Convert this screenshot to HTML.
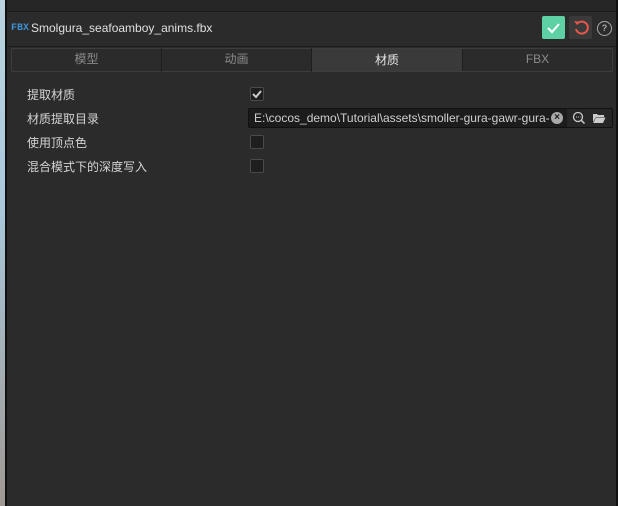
<!DOCTYPE html>
<html><head><meta charset="utf-8"><style>
*{margin:0;padding:0;box-sizing:border-box}
body{width:618px;height:506px;overflow:hidden;background:#2b2b2b;position:relative;font-family:"Liberation Sans","Noto Sans CJK SC",sans-serif;color:#cfcfcf;font-size:12px}
.a{position:absolute}
.cb{position:absolute;left:250px;width:14px;height:14px;border:1px solid #4a4a4a;background:#1e1e1e;border-radius:2px}
.lbl{position:absolute;left:27px;font-size:12px;color:#d4d4d4}
.tab{position:absolute;top:48px;height:24px;line-height:23px;text-align:center;color:#8a8a8a;font-size:12px;border-right:1px solid #1f1f1f}
</style></head><body>
<div class="a" style="left:0;top:0;width:5px;height:506px;background:linear-gradient(#bcd3e0,#a9c9db 40%,#a09893)"></div>
<div class="a" style="left:5px;top:0;width:2px;height:506px;background:#111"></div>
<div class="a" style="left:616px;top:0;width:2px;height:506px;background:#111"></div>
<div class="a" style="left:7px;top:0;width:609px;height:12px;background:#262626;border-bottom:1px solid #1a1a1a"></div>
<div class="a" style="left:7px;top:46px;width:609px;height:1px;background:#1e1e1e"></div>
<div class="a" style="left:11px;top:23px;font-size:10px;font-weight:bold;color:#3f8fd0;font-family:'Liberation Mono',monospace">FBX</div>
<div class="a" style="left:31px;top:21px;font-size:12px;color:#e0e0e0">Smolgura_seafoamboy_anims.fbx</div>
<div class="a" style="left:542px;top:16px;width:23px;height:23px;background:#5ed1a4;border-radius:2px">
<svg width="23" height="23"><path d="M6 12l4 4 7-8" stroke="#fff" stroke-width="2" fill="none"/></svg></div>
<div class="a" style="left:569px;top:16px;width:23px;height:23px;background:#3a3a3a;border-radius:2px">
<svg width="23" height="23"><path d="M8 8A6 6 0 1 1 7 13" stroke="#e8574b" stroke-width="2" fill="none"/><path d="M5 5l3 4 3-3z" fill="#e8574b"/></svg></div>
<div class="a" style="left:597px;top:21px;width:15px;height:15px;border:1.5px solid #aaa;border-radius:50%;font-size:9px;color:#aaa;text-align:center;line-height:12px;font-weight:bold">?</div>
<div class="a" style="left:11px;top:48px;width:602px;height:24px;border:1px solid #3d3d3d;border-radius:2px;background:#2b2b2b"></div>
<div class="tab" style="left:12px;width:150px">模型</div>
<div class="tab" style="left:162px;width:150px">动画</div>
<div class="tab" style="left:312px;width:151px;background:#3a3a3a;color:#e6e6e6;top:49px;height:22px;line-height:22px">材质</div>
<div class="tab" style="left:463px;width:149px;border:none">FBX</div>
<div class="lbl" style="top:86px">提取材质</div>
<div class="lbl" style="top:110px">材质提取目录</div>
<div class="lbl" style="top:134px">使用顶点色</div>
<div class="lbl" style="top:158px">混合模式下的深度写入</div>
<div class="cb" style="top:87px"><svg width="12" height="12"><path d="M2 6l3 3 5-6" stroke="#ccc" stroke-width="2" fill="none"/></svg></div>
<div class="cb" style="top:135px"></div>
<div class="cb" style="top:159px"></div>
<div class="a" style="left:248px;top:108px;width:365px;height:20px;background:#1c1c1c;border:1px solid #111;border-radius:2px"></div>
<div class="a" style="left:254px;top:111px;font-size:12px;color:#cfcfcf;white-space:nowrap;width:296px;overflow:hidden">E:\cocos_demo\Tutorial\assets\smoller-gura-gawr-gura-</div>
<div class="a" style="left:551px;top:112px;width:12px;height:12px;border-radius:50%;background:#aaa;color:#1c1c1c;font-size:10px;line-height:12px;text-align:center;font-weight:bold">×</div>
<div class="a" style="left:567px;top:109px;width:45px;height:18px;background:#262626"></div>
<svg class="a" style="left:572px;top:111px" width="14" height="14"><circle cx="6" cy="6" r="4.5" stroke="#ccc" stroke-width="1.3" fill="none"/><path d="M9.5 9.5l3 3" stroke="#ccc" stroke-width="1.5"/><path d="M4 6h1M6 6h1M8 6h0.5" stroke="#ccc"/></svg>
<svg class="a" style="left:592px;top:112px" width="14" height="12"><path d="M1 2h4l1 1h6v2H4L1 10z" fill="#ccc"/><path d="M4 5.5h9.5L11 11H1.2z" fill="#ccc"/></svg>
</body></html>
